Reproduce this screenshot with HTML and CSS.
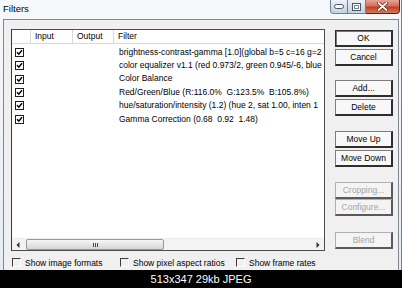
FILE: index.html
```html
<!DOCTYPE html>
<html>
<head>
<meta charset="utf-8">
<title>Filters</title>
<link rel="stylesheet" href="styles.css">
</head>
<body>
<div class="window">
  <div class="titlebar">
    <span class="title">Filters</span>
    <div class="caption">
      <span class="cap cap-min"><svg width="10" height="5" viewBox="0 0 10 5"><rect x="0.5" y="0.5" width="9" height="4" rx="2" fill="#fff" stroke="#4a5566"/></svg></span>
      <span class="cap cap-max"><svg width="9" height="8" viewBox="0 0 9 8"><rect x="0.5" y="0.5" width="8" height="7" fill="#fff" stroke="#4a5566"/><rect x="2.5" y="2.5" width="4" height="3" fill="none" stroke="#7b889a"/></svg></span>
      <span class="cap cap-close"><svg width="11" height="9" viewBox="0 0 11 9"><path d="M1.5 1 L9.5 8 M9.5 1 L1.5 8" stroke="#5a1a14" stroke-width="3.2" stroke-linecap="round"/><path d="M1.5 1 L9.5 8 M9.5 1 L1.5 8" stroke="#fff" stroke-width="1.8" stroke-linecap="round"/></svg></span>
    </div>
  </div>
  <div class="client">
    <div class="main">
      <div class="listbox">
        <div class="header cols">
          <div class="hcell"></div>
          <div class="hcell">Input</div>
          <div class="hcell">Output</div>
          <div class="hcell">Filter</div>
        </div>
        <div class="rows">
          <div class="row cols"><span class="cell chkcell"><svg class="chk" width="9" height="9" viewBox="0 0 9 9"><rect x="0.5" y="0.5" width="8" height="8" fill="#fff" stroke="#1e1e1e"/><path d="M2 4.2 L3.8 6.2 L7 2.3" fill="none" stroke="#000" stroke-width="1.5"/></svg></span><span class="cell"></span><span class="cell"></span><span class="cell name">brightness-contrast-gamma [1.0](global b=5 c=16 g=2</span></div>
          <div class="row cols"><span class="cell chkcell"><svg class="chk" width="9" height="9" viewBox="0 0 9 9"><rect x="0.5" y="0.5" width="8" height="8" fill="#fff" stroke="#1e1e1e"/><path d="M2 4.2 L3.8 6.2 L7 2.3" fill="none" stroke="#000" stroke-width="1.5"/></svg></span><span class="cell"></span><span class="cell"></span><span class="cell name">color equalizer v1.1 (red 0.973/2, green 0.945/-6, blue</span></div>
          <div class="row cols"><span class="cell chkcell"><svg class="chk" width="9" height="9" viewBox="0 0 9 9"><rect x="0.5" y="0.5" width="8" height="8" fill="#fff" stroke="#1e1e1e"/><path d="M2 4.2 L3.8 6.2 L7 2.3" fill="none" stroke="#000" stroke-width="1.5"/></svg></span><span class="cell"></span><span class="cell"></span><span class="cell name">Color Balance</span></div>
          <div class="row cols"><span class="cell chkcell"><svg class="chk" width="9" height="9" viewBox="0 0 9 9"><rect x="0.5" y="0.5" width="8" height="8" fill="#fff" stroke="#1e1e1e"/><path d="M2 4.2 L3.8 6.2 L7 2.3" fill="none" stroke="#000" stroke-width="1.5"/></svg></span><span class="cell"></span><span class="cell"></span><span class="cell name">Red/Green/Blue (R:116.0%  G:123.5%  B:105.8%)</span></div>
          <div class="row cols"><span class="cell chkcell"><svg class="chk" width="9" height="9" viewBox="0 0 9 9"><rect x="0.5" y="0.5" width="8" height="8" fill="#fff" stroke="#1e1e1e"/><path d="M2 4.2 L3.8 6.2 L7 2.3" fill="none" stroke="#000" stroke-width="1.5"/></svg></span><span class="cell"></span><span class="cell"></span><span class="cell name">hue/saturation/intensity (1.2) (hue 2, sat 1.00, inten 1</span></div>
          <div class="row cols"><span class="cell chkcell"><svg class="chk" width="9" height="9" viewBox="0 0 9 9"><rect x="0.5" y="0.5" width="8" height="8" fill="#fff" stroke="#1e1e1e"/><path d="M2 4.2 L3.8 6.2 L7 2.3" fill="none" stroke="#000" stroke-width="1.5"/></svg></span><span class="cell"></span><span class="cell"></span><span class="cell name">Gamma Correction (0.68  0.92  1.48)</span></div>
        </div>
        <div class="hscroll">
          <span class="arrow"><svg width="4" height="6" viewBox="0 0 4 6"><path d="M3.5 0 L0.5 3 L3.5 6 Z" fill="#333"/></svg></span>
          <span class="thumb"><span class="grip"></span></span>
          <span class="track"></span>
          <span class="arrow"><svg width="4" height="6" viewBox="0 0 4 6"><path d="M0.5 0 L3.5 3 L0.5 6 Z" fill="#333"/></svg></span>
        </div>
      </div>
      <div class="options">
        <label class="opt opt-1"><span class="box"></span>Show image formats</label>
        <label class="opt opt-2"><span class="box"></span>Show pixel aspect ratios</label>
        <label class="opt"><span class="box"></span>Show frame rates</label>
      </div>
    </div>
    <div class="buttons">
      <div class="group">
        <button class="btn default">OK</button>
        <button class="btn">Cancel</button>
      </div>
      <div class="group g-add">
        <button class="btn">Add...</button>
        <button class="btn">Delete</button>
      </div>
      <div class="group g-move">
        <button class="btn">Move Up</button>
        <button class="btn">Move Down</button>
      </div>
      <div class="group g-crop">
        <button class="btn" disabled>Cropping...</button>
        <button class="btn" disabled>Configure...</button>
      </div>
      <div class="group g-blend">
        <button class="btn" disabled>Blend</button>
      </div>
    </div>
  </div>
</div>
<div class="footer">513x347 29kb JPEG</div>
</body>
</html>
```

FILE: styles.css
```css
* { box-sizing: border-box; }

html, body {
  margin: 0;
  padding: 0;
}

body {
  width: 402px;
  height: 288px;
  overflow: hidden;
  background: #000;
  font-family: "Liberation Sans", Arial, sans-serif;
  font-size: 8.5px;
  color: #000;
}

.window {
  height: 270px;
  display: flex;
  flex-direction: column;
  padding: 0 2px 0 3px;
  background: linear-gradient(180deg, #f6f9fc 0%, #e6edf4 100%);
  border-right: 1px solid #6f7c8c;
}

.titlebar {
  height: 19px;
  display: flex;
  align-items: flex-start;
  margin-left: -3px;
  margin-right: -2px;
  padding-left: 3px;
}

.title {
  font-size: 9.5px;
  line-height: 11px;
  margin-top: 3px;
  color: #000;
}

.caption {
  margin-left: auto;
  display: flex;
  height: 14px;
  margin-right: 1px;
}

.cap {
  display: flex;
  align-items: center;
  justify-content: center;
  height: 14px;
  border: 1px solid #6e7e93;
  border-top: none;
}

.cap-min {
  width: 18px;
  border-radius: 0 0 0 4px;
  background: linear-gradient(180deg, #eef3f8 0%, #d6e0ea 50%, #c5d2e0 100%);
}

.cap-max {
  width: 18px;
  border-left: none;
  background: linear-gradient(180deg, #eef3f8 0%, #d6e0ea 50%, #c5d2e0 100%);
}

.cap-close {
  width: 34px;
  border-left: none;
  border-color: #5b2119;
  border-radius: 0 0 4px 0;
  background: linear-gradient(180deg, #e7a493 0%, #d46f58 45%, #c04126 55%, #d8765a 100%);
}

.client {
  flex: 1;
  display: flex;
  background: #f0f0f0;
  border: 1px solid #7e8794;
  border-bottom: none;
  padding: 9px 5px 0 7px;
}

.main {
  width: 315px;
  display: flex;
  flex-direction: column;
}

.listbox {
  height: 222px;
  display: flex;
  flex-direction: column;
  background: #fff;
  border: 1px solid #4d4d4d;
  border-left-color: #3a3a3a;
  overflow: hidden;
}

.cols {
  display: grid;
  grid-template-columns: 19px 42px 41px 1fr;
}

.header {
  height: 14px;
  border-bottom: 1px solid #d8d8d8;
}

.hcell {
  line-height: 13px;
  padding-left: 4px;
  border-right: 1px solid #d8d8d8;
  white-space: nowrap;
}

.hcell:last-child {
  border-right: none;
}

.rows {
  flex: 1;
  padding-top: 1.6px;
}

.row {
  height: 13.4px;
}

.cell {
  display: flex;
  align-items: center;
  overflow: hidden;
}

.chkcell {
  padding-left: 3px;
}

.chk {
  display: block;
}

.name {
  padding-left: 5px;
  white-space: pre;
  line-height: 13.4px;
}

.hscroll {
  height: 12px;
  display: flex;
  align-items: stretch;
  background: #f3f3f3;
  border-top: 1px solid #ececec;
}

.arrow {
  width: 12px;
  display: flex;
  align-items: center;
  justify-content: center;
}

.thumb {
  width: 138px;
  margin: 0 0 0 2px;
  border: 1px solid #989898;
  border-radius: 2px;
  background: linear-gradient(180deg, #f7f7f7 0%, #e6e6e6 50%, #d6d6d6 100%);
  display: flex;
  align-items: center;
  justify-content: center;
}

.grip {
  width: 5px;
  height: 4px;
  background: repeating-linear-gradient(90deg, #4a4a4a 0 1px, transparent 1px 2px);
}

.track {
  flex: 1;
}

.options {
  display: flex;
  align-items: center;
  height: 11px;
  margin-top: 6px;
  padding-left: 1px;
}

.opt {
  display: flex;
  align-items: center;
  white-space: nowrap;
  color: #000;
}

.opt-1 { width: 108px; }
.opt-2 { width: 116px; }

.box {
  width: 9px;
  height: 9px;
  margin-right: 4px;
  border-top: 1px solid #3c3c3c;
  border-left: 1px solid #3c3c3c;
  border-right: 1px solid #fdfdfd;
  border-bottom: 1px solid #fdfdfd;
  background: #f0f0f0;
}

.buttons {
  width: 58px;
  margin-left: 10px;
  padding-top: 1px;
  display: flex;
  flex-direction: column;
}

.group {
  display: flex;
  flex-direction: column;
  gap: 2px;
}

.g-add { margin-top: 14px; }
.g-move { margin-top: 15px; }
.g-crop { margin-top: 15px; gap: 0; }
.g-blend { margin-top: 16px; }

.btn {
  height: 17px;
  width: 58px;
  padding: 0;
  font-family: inherit;
  font-size: 8.5px;
  color: #000;
  background: #f8f8f8;
  border-style: solid;
  border-width: 1px 2px 2px 1px;
  border-color: #7d7d7d #2e2e2e #2e2e2e #7d7d7d;
  border-radius: 0;
}

.btn.default {
  border-color: #2e2e2e;
  border-width: 1px 2px 2px 1px;
  box-shadow: inset 1px 1px 0 #777;
}

.btn:disabled {
  color: #a4a4a4;
  border-color: #b0b0b0 #5a5a5a #5a5a5a #b0b0b0;
  background: #f4f4f4;
}

.footer {
  height: 18px;
  background: #000;
  color: #fff;
  font-family: "Liberation Sans", Arial, sans-serif;
  font-size: 11px;
  line-height: 18px;
  text-align: center;
}
```
